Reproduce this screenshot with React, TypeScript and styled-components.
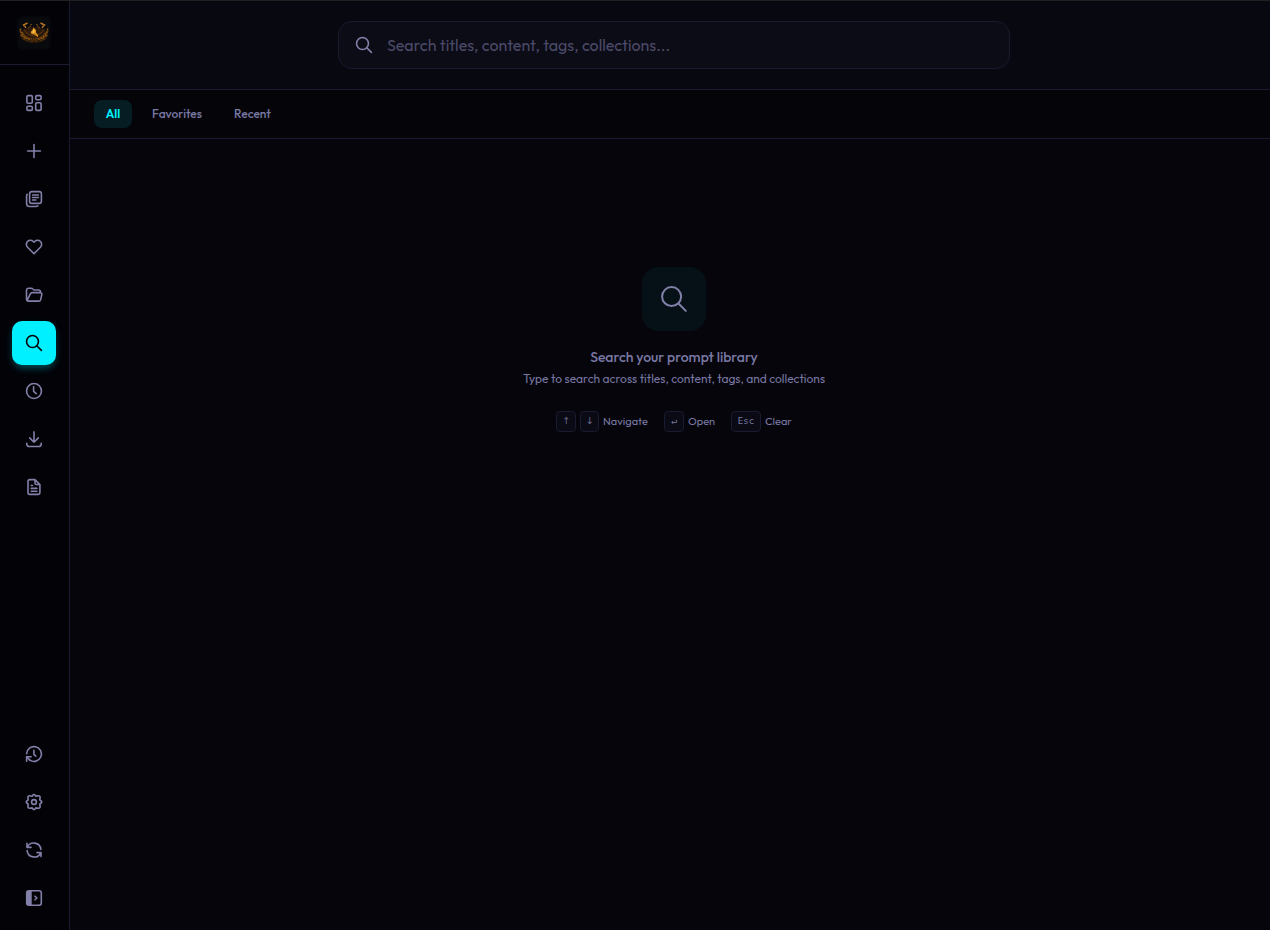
import React from "react";
import styled, { createGlobalStyle, css } from "styled-components";

const c = {
  line: "#1a1a30",
  icon: "#8280a9",
  text: "#7978a3",
  cyan: "#00f0ff",
};

const Global = createGlobalStyle`
  *, *::before, *::after { box-sizing: border-box; }
  html, body { margin: 0; height: 100%; background: #05050b; overflow: hidden; }
  body { font-family: Outfit, Lato, "Open Sans", sans-serif; color: ${c.text}; }
  button, input { font: inherit; color: inherit; border: 0; padding: 0; background: none; }
`;

const Shell = styled.div`
  display: flex;
  height: 100vh;
  border-top: 1px solid #202020;
  overflow: hidden;
`;

const Sidebar = styled.aside`
  flex: none;
  width: 70px;
  display: flex;
  flex-direction: column;
  background: #020207;
  border-right: 1px solid ${c.line};
`;

const Brand = styled.div`
  height: 64px;
  padding: 15px 0 0 17px;
  border-bottom: 1px solid ${c.line};
  svg { display: block; }
`;

const Nav = styled.nav`
  display: flex;
  flex-direction: column;
  gap: 4px;
  padding: 16px 12px 0;
`;

const BottomNav = styled(Nav)`
  margin-top: auto;
  padding: 0 12px 10px;
`;

const NavButton = styled.button<{ $active?: boolean }>`
  width: 44px;
  height: 44px;
  display: grid;
  place-items: center;
  border-radius: 10px;
  color: ${c.icon};
  ${(p) =>
    p.$active &&
    css`
      color: #020207;
      background: ${c.cyan};
      box-shadow: 0 4px 8px -2px rgba(0, 240, 255, 0.4);
    `}
`;

const Main = styled.main`
  flex: none;
  width: calc(100vw - 62px);
  display: flex;
  flex-direction: column;
  background: #05050b;
`;

const SearchHeader = styled.header`
  height: 89px;
  padding-top: 20px;
  background: #080811;
  border-bottom: 1px solid ${c.line};
`;

const SearchBox = styled.label`
  width: 672px;
  height: 48px;
  margin: 0 auto;
  padding: 0 16px 0 15px;
  display: flex;
  align-items: center;
  gap: 13px;
  border: 1px solid ${c.line};
  border-radius: 14px;
  background: #0c0c16;
  color: ${c.icon};
`;

const SearchInput = styled.input`
  flex: 1;
  outline: 0;
  font-size: 16px;
  &::placeholder { color: #4b4a69; opacity: 1; }
`;

const Filters = styled.div`
  height: 49px;
  display: flex;
  align-items: center;
  gap: 8px;
  padding: 0 24px;
  background: #050509;
  border-bottom: 1px solid ${c.line};
`;

const Filter = styled.button<{ $w: number; $active?: boolean }>`
  width: ${(p) => p.$w}px;
  height: 28px;
  border-radius: 8px;
  font-size: 12px;
  line-height: 16px;
  font-weight: ${(p) => (p.$active ? 600 : 500)};
  color: ${(p) => (p.$active ? c.cyan : c.text)};
  background: ${(p) => (p.$active ? "#051d23" : "transparent")};
`;

const Empty = styled.section`
  display: flex;
  flex-direction: column;
  align-items: center;
  padding-top: 128px;
`;

const Tile = styled.div`
  width: 64px;
  height: 64px;
  display: grid;
  place-items: center;
  border-radius: 16px;
  background: #051117;
  color: ${c.icon};
`;

const Title = styled.h2`
  margin: 16px 0 0;
  font-size: 14px;
  line-height: 20px;
  font-weight: 500;
`;

const Hint = styled.p`
  margin: 4px 0 0;
  font-size: 12px;
  line-height: 16px;
`;

const Shortcuts = styled.div`
  display: flex;
  gap: 16px;
  margin-top: 24px;
`;

const Shortcut = styled.div`
  display: flex;
  align-items: center;
  gap: 4px;
  height: 21px;
`;

const Key = styled.kbd<{ $w: number }>`
  width: ${(p) => p.$w}px;
  height: 21px;
  display: grid;
  place-items: center;
  padding-bottom: 1px;
  border: 1px solid ${c.line};
  border-radius: 4px;
  background: #0a0a14;
  font: 9px/12px "DejaVu Sans Mono", monospace;
`;

const ArrowKey = styled(Key)`
  padding-bottom: 2px;
  font-size: 10px;
  font-family: "IBM Plex Mono", "DejaVu Sans Mono", monospace;
`;

const KeyLabel = styled.span<{ $w: number }>`
  width: ${(p) => p.$w}px;
  padding-bottom: 1px;
  font-size: 11px;
  line-height: 16px;
  white-space: nowrap;
`;

const Icon = ({ children, size = 20, stroke = 1.6 }: { children: React.ReactNode; size?: number; stroke?: number }) => (
  <svg width={size} height={size} viewBox="0 0 20 20" fill="none" stroke="currentColor" strokeWidth={stroke} strokeLinecap="round" strokeLinejoin="round">
    {children}
  </svg>
);

const glyphs = {
  board: (
    <>
      <rect x="2.9" y="2.6" width="5.4" height="7.7" rx="1.2" />
      <rect x="11.7" y="2.6" width="5.4" height="4.1" rx="1.2" />
      <rect x="2.9" y="13.3" width="5.4" height="4.1" rx="1.2" />
      <rect x="11.7" y="9.7" width="5.4" height="7.7" rx="1.2" />
    </>
  ),
  add: <path d="M10 3.6v12.8M3.6 10h12.8" />,
  library: (
    <>
      <rect x="5.6" y="2.6" width="11.8" height="11.8" rx="2.2" />
      <path d="M3.2 5.3c-.4.5-.6 1.1-.6 1.8v7.4a3 3 0 0 0 3 3h6.4c.7 0 1.300-.2 1.800-.6M8.600 6h5.800M8.600 8.500h5.800M8.600 11h3.300" />
    </>
  ),
  heart: <path d="M10 5.200 9.300 4.500a4.050 4.050 0 0 0-5.700 5.800L10 16.800l6.400-6.500a4.050 4.050 0 0 0-5.700-5.800z" />,
  folder: (
    <path d="M16.500 7.600V6.900a1.900 1.900 0 0 0-1.900-1.900H10L8.200 3.500a2 2 0 0 0-1.100-.3H4.500a2 2 0 0 0-2 2v8.900a2 2 0 0 0 2 2h10.300a2 2 0 0 0 1.900-1.400l1.100-5a1.700 1.700 0 0 0-1.700-2.100H8.300a2 2 0 0 0-1.800 1.100l-3.300 6.500" />
  ),
  search: (
    <>
      <circle cx="8.500" cy="8.500" r="5.950" />
      <path d="m12.800 12.800 4.600 4.600" />
    </>
  ),
  clock: (
    <>
      <circle cx="10" cy="10" r="7.450" />
      <path d="M9.600 5.700v4.600l2.600 2.400" />
    </>
  ),
  download: <path d="M10 2.900v10.200M5.700 8.900l4.300 4.300 4.300-4.300M2.800 14.200v1a2.300 2.300 0 0 0 2.300 2.300h9.800a2.300 2.300 0 0 0 2.300-2.300v-1" />,
  document: (
    <path d="M5.800 2.600h5.100l5 5v8a1.800 1.800 0 0 1-1.800 1.800H5.800A1.800 1.800 0 0 1 4 15.600V4.400a1.800 1.800 0 0 1 1.800-1.800ZM11 2.800v3.400c0 .8.600 1.300 1.300 1.300h3.500M7.200 8.500h1.300M7.200 11.400h5.700M7.200 14.200h5.700" />
  ),
  history: (
    <>
      <path d="M2.600 9.700a7.400 7.400 0 1 1 3.200 6.400M9.900 6.200v4.100l1.900 1.800" />
      <path d="M2.600 17.300v-4.600h4.600" />
      <path d="m3 13.100 2.800 3" />
    </>
  ),
  settings: (
    <>
      <circle cx="10" cy="10" r="2.400" />
      <path d="M8.200 4.200 9 3a1.200 1.200 0 0 1 2 0l.8 1.200 1.500-.3 1.200-.1a1.400 1.400 0 0 1 1.600 1.600l-.3 2.500 1.400 1.100a1.200 1.200 0 0 1 0 2l-1.400 1.100.3 2.500a1.400 1.400 0 0 1-1.600 1.600l-2.700-.3L11 17a1.200 1.200 0 0 1-2 0l-.8-1.100-2.700.3a1.400 1.400 0 0 1-1.600-1.600l.3-2.500L2.800 11a1.200 1.200 0 0 1 0-2l1.400-1.100-.3-2.500a1.400 1.400 0 0 1 1.600-1.600Z" />
    </>
  ),
  sync: (
    <path d="M3 3.400v4h4M3.200 7.200A7.200 7.200 0 0 1 16.900 9.400M17 16.600v-4h-4M16.800 12.800A7.200 7.200 0 0 1 3.100 10.600" />
  ),
  panel: (
    <>
      <rect x="2.700" y="2.700" width="14.600" height="14.600" rx="2.200" />
      <path d="M4.500 2.700h3.200v14.600H4.500a1.800 1.800 0 0 1-1.800-1.800v-11a1.800 1.800 0 0 1 1.800-1.800Z" fill="currentColor" stroke="none" />
      <path d="m11 8.200 1.800 1.800-1.800 1.800" />
    </>
  ),
};

const Emblem = () => (
  <svg width="34" height="34" viewBox="0 0 34 34" fill="none">
    <rect width="34" height="34" rx="5" fill="#05070c" />
    <rect x="1.500" y="1.500" width="31" height="31" rx="4" fill="#080a0e" />
    <ellipse cx="17" cy="19" rx="14" ry="8" fill="#3a210a" opacity=".7" />
    <g stroke="#935711" strokeWidth="1">
      <path d="m10.500 7-4 2 2.500 2.700M23.500 7l4 2-2.500 2.700" stroke="#b97423" strokeWidth="1.400" />
      <path d="m13 9 2-.6M21 9l-2-.6M11 12l3-2M23 12l-3-2" stroke="#74450e" />
      <path d="M3.500 12.500c-.3 5 3 9.500 9.500 10.800M30.500 12.500c.3 5-3 9.500-9.500 10.800" strokeDasharray="2 .8" strokeWidth="1.500" />
      <path d="M5.500 16c1.500 4.500 5.500 6.800 11.500 7 6-.2 10-2.500 11.500-7" stroke="#8c530f" strokeDasharray="1.500 .7" />
      <path d="m2.500 15 3 2.500m-2 2 4 1.300m-1 2.200 4-.5M31.500 15l-3 2.500m2 2-4 1.300m1 2.200-4-.5" stroke="#80500f" />
      <path d="M7 13.500c2.500 4 5.500 5.500 10 6.500 4.500-1 7.500-2.500 10-6.500M9.500 25l3-2 2.200 2.700L17 23.500l2.300 2.200 2.200-2.700 3 2" stroke="#6b3e0b" strokeWidth=".8" />
    </g>
    <path d="m16.500 11.500 2.500 2.500v2.500l2 2.500v2.500l-3-2.800-3.500-.7-1-2 2-2Z" fill="#d98c1c" />
    <path d="m16.500 13 1.300 1.500-.6 2.800-1.800-.5Z" fill="#ffc94a" />
  </svg>
);

type Glyph = keyof typeof glyphs;
const primary: Glyph[] = ["board", "add", "library", "heart", "folder", "search", "clock", "download", "document"];
const secondary: Glyph[] = ["history", "settings", "sync", "panel"];

export default function App() {
  return (
    <>
      <Global />
      <Shell>
        <Sidebar>
          <Brand><Emblem /></Brand>
          <Nav>
            {primary.map((g) => (
              <NavButton key={g} $active={g === "search"} aria-label={g}><Icon>{glyphs[g]}</Icon></NavButton>
            ))}
          </Nav>
          <BottomNav>
            {secondary.map((g) => (
              <NavButton key={g} aria-label={g}><Icon>{glyphs[g]}</Icon></NavButton>
            ))}
          </BottomNav>
        </Sidebar>
        <Main>
          <SearchHeader>
            <SearchBox>
              <Icon>{glyphs.search}</Icon>
              <SearchInput placeholder="Search titles, content, tags, collections..." />
            </SearchBox>
          </SearchHeader>
          <Filters>
            <Filter $w={38} $active>All</Filter>
            <Filter $w={74}>Favorites</Filter>
            <Filter $w={61}>Recent</Filter>
          </Filters>
          <Empty>
            <Tile><Icon size={32} stroke={1.25}>{glyphs.search}</Icon></Tile>
            <Title>Search your prompt library</Title>
            <Hint>Type to search across titles, content, tags, and collections</Hint>
            <Shortcuts>
              <Shortcut><ArrowKey $w={20}>↑</ArrowKey><ArrowKey $w={19}>↓</ArrowKey><KeyLabel $w={45}>Navigate</KeyLabel></Shortcut>
              <Shortcut><ArrowKey $w={20}>↵</ArrowKey><KeyLabel $w={27}>Open</KeyLabel></Shortcut>
              <Shortcut><Key $w={30}>Esc</Key><KeyLabel $w={27}>Clear</KeyLabel></Shortcut>
            </Shortcuts>
          </Empty>
        </Main>
      </Shell>
    </>
  );
}
